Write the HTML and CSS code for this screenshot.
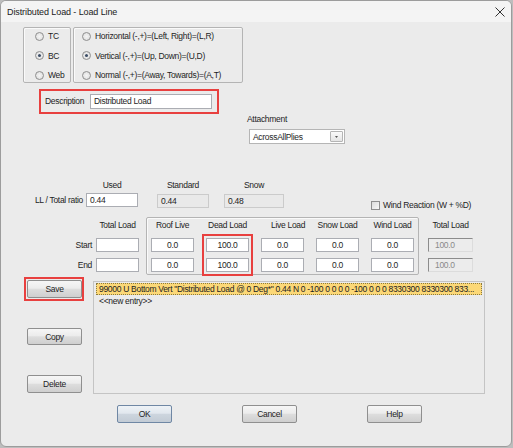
FILE: index.html
```html
<!DOCTYPE html>
<html lang="en">
  <head>
    <meta charset="UTF-8" />
    <title>Distributed Load - Load Line</title>
    <link rel="stylesheet" href="styles.css">
  </head>
  <body>
    <div class="window">
      <div class="titlebar">
        <span class="title">Distributed Load - Load Line</span>
        <svg class="close" width="10" height="10" viewBox="0 0 10 10">
          <path d="M0.5 0.5 L9.5 9.5 M9.5 0.5 L0.5 9.5" />
        </svg>
      </div>

      <div class="radio-row">
        <div class="group chord-group">
          <div class="radio"><span class="dot"></span>TC</div>
          <div class="radio checked"><span class="dot"></span>BC</div>
          <div class="radio"><span class="dot"></span>Web</div>
        </div>
        <div class="group dir-group">
          <div class="radio"><span class="dot"></span>Horizontal (-,+)=(Left, Right)=(L,R)</div>
          <div class="radio checked"><span class="dot"></span>Vertical (-,+)=(Up, Down)=(U,D)</div>
          <div class="radio"><span class="dot"></span>Normal (-,+)=(Away, Towards)=(A,T)</div>
        </div>
      </div>

      <div class="desc-box marked">
        <span class="desc-label">Description</span>
        <div class="field desc-field">Distributed Load</div>
      </div>

      <div class="attach">
        <div class="attach-label">Attachment</div>
        <div class="select">
          AcrossAllPlies
          <span class="drop"><svg width="5" height="3" viewBox="0 0 5 3"><path d="M0 0 H5 L2.5 3 Z" /></svg></span>
        </div>
      </div>

      <div class="ratio-head">
        <span class="c-used">Used</span>
        <span class="c-std">Standard</span>
        <span class="c-snow">Snow</span>
      </div>
      <div class="ratio-row">
        <span class="ratio-label">LL / Total ratio</span>
        <div class="field c-used">0.44</div>
        <div class="field readonly c-std">0.44</div>
        <div class="field readonly c-snow">0.48</div>
        <div class="check"><span class="box"></span>Wind Reaction (W + %D)</div>
      </div>

      <div class="loads">
        <div class="col label-col">
          <div class="col-head"></div>
          <div class="row-label">Start</div>
          <div class="row-label">End</div>
        </div>
        <div class="col total-col">
          <div class="col-head">Total Load</div>
          <div class="field"></div>
          <div class="field"></div>
        </div>
        <div class="group load-group">
          <div class="col">
            <div class="col-head">Roof Live</div>
            <div class="field num">0.0</div>
            <div class="field num">0.0</div>
          </div>
          <div class="col">
            <div class="col-head">Dead Load</div>
            <div class="marked dead-box">
              <div class="field num">100.0</div>
              <div class="field num">100.0</div>
            </div>
          </div>
          <div class="col">
            <div class="col-head shift">Live Load</div>
            <div class="field num">0.0</div>
            <div class="field num">0.0</div>
          </div>
          <div class="col">
            <div class="col-head">Snow Load</div>
            <div class="field num">0.0</div>
            <div class="field num">0.0</div>
          </div>
          <div class="col">
            <div class="col-head">Wind Load</div>
            <div class="field num">0.0</div>
            <div class="field num">0.0</div>
          </div>
        </div>
        <div class="col sum-col">
          <div class="col-head">Total Load</div>
          <div class="field sunken">100.0</div>
          <div class="field sunken">100.0</div>
        </div>
      </div>

      <div class="lower">
        <div class="side">
          <div class="marked save-box"><button class="btn">Save</button></div>
          <button class="btn copy-btn">Copy</button>
          <button class="btn delete-btn">Delete</button>
        </div>
        <div class="listbox">
          <div class="entry selected">99000 U Bottom Vert "Distributed Load @ 0 Deg*" 0.44 N 0 -100 0 0 0 0 -100 0 0 0 8330300 8330300 833...</div>
          <div class="entry">&lt;&lt;new entry&gt;&gt;</div>
        </div>
      </div>

      <div class="footer">
        <button class="btn default">OK</button>
        <button class="btn">Cancel</button>
        <button class="btn">Help</button>
      </div>
    </div>
  </body>
</html>
```

FILE: styles.css
```css
* {
  box-sizing: border-box;
}

html,
body {
  margin: 0;
  background-color: #bdbdbd;
}

body {
  font-family: "Liberation Sans", Arial, sans-serif;
  font-size: 8.5px;
  letter-spacing: -0.3px;
  color: #1e1e1e;
}

.window {
  width: 512px;
  height: 447px;
  border: 1px solid #9c9c9c;
  border-radius: 6px;
  background-color: #ebebeb;
  overflow: hidden;
}

.titlebar {
  height: 21px;
  display: flex;
  align-items: center;
  justify-content: space-between;
  padding: 0 6px;
  background-color: #f4f4f4;
}

.title {
  font-size: 9px;
  letter-spacing: -0.1px;
  color: #222;
}

.close {
  stroke: #333;
  stroke-width: 1;
  fill: none;
}

/* option groups */

.radio-row {
  display: flex;
  gap: 2px;
  margin: 5px 0 0 22px;
}

.group {
  border: 1px solid #b4b4b4;
  border-radius: 2px;
  box-shadow: inset 1px 1px 0 #fafafa;
}

.chord-group,
.dir-group {
  height: 56px;
  display: flex;
  flex-direction: column;
  gap: 7.5px;
  padding-top: 2px;
}

.chord-group {
  width: 48px;
  padding-left: 11px;
}

.dir-group {
  width: 170px;
  padding-left: 8px;
}

.radio {
  height: 12px;
  display: flex;
  align-items: center;
  gap: 4px;
  white-space: nowrap;
}

.dot {
  width: 9px;
  height: 9px;
  border-radius: 50%;
  border: 1px solid #8f8f8f;
  background: radial-gradient(circle, #f4f4f4 0%, #dcdcdc 100%);
  display: flex;
  align-items: center;
  justify-content: center;
}

.radio.checked .dot::after {
  content: "";
  width: 3px;
  height: 3px;
  border-radius: 50%;
  background-color: #3c4d66;
}

.marked {
  border: 2px solid #e8403f;
}

/* description */

.desc-box {
  width: 180px;
  height: 25px;
  margin: 6px 0 0 38px;
  display: flex;
  align-items: flex-start;
  padding: 3px 0 0 4px;
}

.desc-label {
  width: 45px;
  line-height: 10px;
  margin-top: 2px;
}

.field {
  height: 14px;
  border: 1px solid #abadb3;
  background-color: #fff;
  line-height: 12px;
  padding: 0 3px;
  white-space: nowrap;
}

.desc-field {
  width: 122px;
  height: 15px;
  line-height: 13px;
}

/* attachment */

.attach {
  margin-left: 246px;
}

.attach-label {
  line-height: 10px;
}

.select {
  width: 96px;
  height: 15px;
  margin: 5px 0 0 2px;
  border: 1px solid #b5b5b5;
  background-color: #fff;
  display: flex;
  align-items: center;
  justify-content: space-between;
  padding: 0 0 0 3px;
}

.drop {
  width: 13px;
  height: 11px;
  margin-right: 1px;
  border: 1px solid #b4b4b4;
  border-radius: 1px;
  background: linear-gradient(#fafafa, #e4e4e4);
  display: flex;
  align-items: center;
  justify-content: center;
}

.drop svg {
  fill: #555;
  width: 3px;
  height: 2px;
}

/* ratio */

.ratio-head,
.ratio-row {
  display: flex;
}

.ratio-head {
  margin: 36px 0 0 85px;
  line-height: 10px;
}

.ratio-head span {
  text-align: center;
}

.ratio-row {
  margin-top: 3px;
  align-items: flex-start;
}

.ratio-label {
  width: 82px;
  text-align: right;
  margin-right: 3px;
  line-height: 14px;
}

.c-used {
  width: 52px;
}

.c-std {
  width: 52px;
  margin-left: 19px;
}

.c-snow {
  width: 60px;
  margin-left: 15px;
}

.ratio-row .c-std,
.ratio-row .c-snow {
  margin-top: 1px;
}

.readonly {
  background-color: #e9e9e9;
  border-color: #cbcbcb;
}

.check {
  display: flex;
  align-items: center;
  gap: 3px;
  margin: 8px 0 0 87px;
  white-space: nowrap;
  line-height: 9px;
}

.box {
  width: 9px;
  height: 9px;
  border: 1px solid #8f8f8f;
  background: linear-gradient(135deg, #dcdcdc, #f8f8f8);
}

/* load table */

.loads {
  display: flex;
  align-items: flex-start;
  margin: 7px 0 0 59px;
}

.col {
  display: flex;
  flex-direction: column;
  gap: 6px;
  width: 43px;
}

.col-head {
  height: 20px;
  line-height: 14px;
  margin-bottom: -6px;
  text-align: center;
  white-space: nowrap;
}

.label-col,
.total-col,
.sum-col {
  padding-top: 1px;
}

.label-col {
  width: 32px;
}

.row-label {
  height: 14px;
  line-height: 14px;
  text-align: right;
}

.total-col {
  margin-left: 4px;
}

.load-group {
  width: 273px;
  height: 58px;
  margin-left: 7px;
  display: grid;
  grid-template-columns: repeat(5, 43px);
  column-gap: 12px;
  padding: 0 0 0 4px;
}

.dead-box {
  width: 51px;
  margin: -4px 0 0 -4px;
  padding: 2px;
  display: flex;
  flex-direction: column;
  gap: 6px;
}

.shift {
  padding-left: 10px;
}

.num {
  text-align: center;
}

.sum-col {
  width: 45px;
  margin-left: 9px;
}

.sunken {
  background-color: #ececec;
  border-color: #8c8c8c #dcdcdc #dcdcdc #8c8c8c;
  color: #8a8a8a;
  padding-left: 6px;
}

/* list and buttons */

.lower {
  display: flex;
  align-items: flex-start;
  margin: 2px 0 0 23px;
}

.side {
  width: 60px;
  display: flex;
  flex-direction: column;
  align-items: flex-start;
}

.save-box {
  width: 60px;
  height: 24px;
  padding: 1px;
}

.btn {
  width: 55px;
  height: 18px;
  padding: 0;
  border: 1px solid #8f8f8f;
  border-radius: 2px;
  background: linear-gradient(#f6f6f6 0%, #ececec 45%, #dddddd 52%, #cfcfcf 100%);
  font-family: inherit;
  font-size: inherit;
  letter-spacing: inherit;
  color: #1e1e1e;
}

.copy-btn {
  height: 17px;
  margin: 27px 0 0 3px;
}

.delete-btn {
  margin: 30px 0 0 3px;
}

.listbox {
  width: 392px;
  height: 113px;
  margin: 4px 0 0 9px;
  border: 1px solid #c4c4c4;
  padding: 1px 2px;
}

.entry {
  height: 12px;
  line-height: 11px;
  padding-left: 2px;
  white-space: nowrap;
  overflow: hidden;
}

.selected {
  background-color: #fcd877;
  border: 1px dotted #8a7a40;
}

.entry + .entry {
  margin-top: 1px;
  padding-left: 3px;
}

.footer {
  display: flex;
  gap: 70px;
  margin: 11px 0 0 116px;
}

.default {
  border-color: #6f87a4;
  background: linear-gradient(#eef2f6 0%, #e1e7ee 45%, #cdd5de 52%, #c2cbd5 100%);
}
```
